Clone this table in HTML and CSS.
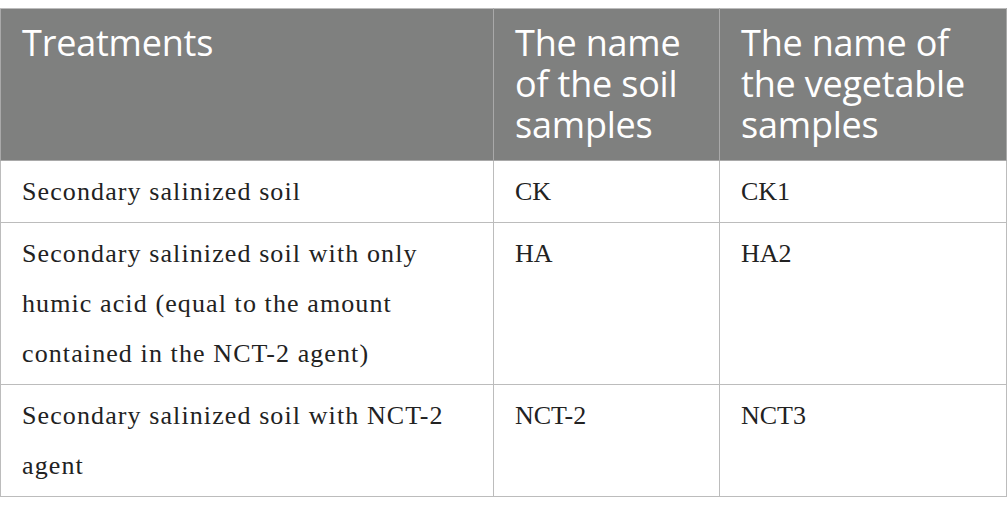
FILE: index.html
```html
<!DOCTYPE html>
<html lang="en">
<head>
<meta charset="utf-8">
<title>Treatments table</title>
<link rel="stylesheet" href="styles.css">
</head>
<body>
<table class="data-table">
  <colgroup>
    <col class="col-treat">
    <col class="col-soil">
    <col class="col-veg">
  </colgroup>
  <thead>
    <tr>
      <th>Treatments</th>
      <th>The name of the soil samples</th>
      <th>The name of the vegetable samples</th>
    </tr>
  </thead>
  <tbody>
    <tr>
      <td>Secondary salinized soil</td>
      <td class="code">CK</td>
      <td class="code">CK1</td>
    </tr>
    <tr>
      <td>Secondary salinized soil with only humic acid (equal to the amount contained in the NCT-2 agent)</td>
      <td class="code">HA</td>
      <td class="code">HA2</td>
    </tr>
    <tr>
      <td>Secondary salinized soil with NCT-2 agent</td>
      <td class="code">NCT-2</td>
      <td class="code">NCT3</td>
    </tr>
  </tbody>
</table>
</body>
</html>
```

FILE: styles.css
```css
html, body {
  margin: 0;
  padding: 0;
  background: #ffffff;
}

body {
  padding-top: 8px;
}

.data-table {
  width: 1006px;
  border-collapse: collapse;
  table-layout: fixed;
  border: 1px solid #bcbcbc;
}

.col-treat { width: 493px; }
.col-soil { width: 226px; }
.col-veg { width: 287px; }

.data-table th {
  background: #7f807f;
  color: #ffffff;
  font-family: "Open Sans", "Noto Sans", sans-serif;
  font-weight: 400;
  font-size: 36px;
  line-height: 41px;
  letter-spacing: -0.2px;
  text-align: left;
  vertical-align: top;
  padding: 13px 18px 15px 21px;
  border: 1px solid #a9a9a9;
  border-top-color: #bcbcbc;
}

.data-table td {
  font-family: "Liberation Serif", "Times New Roman", serif;
  font-size: 26px;
  letter-spacing: 1.1px;
  line-height: 50px;
  color: #222222;
  vertical-align: top;
  padding: 6px 20px 5px 21px;
  border: 1px solid #bcbcbc;
}

.data-table td.code {
  letter-spacing: 0;
}
```
